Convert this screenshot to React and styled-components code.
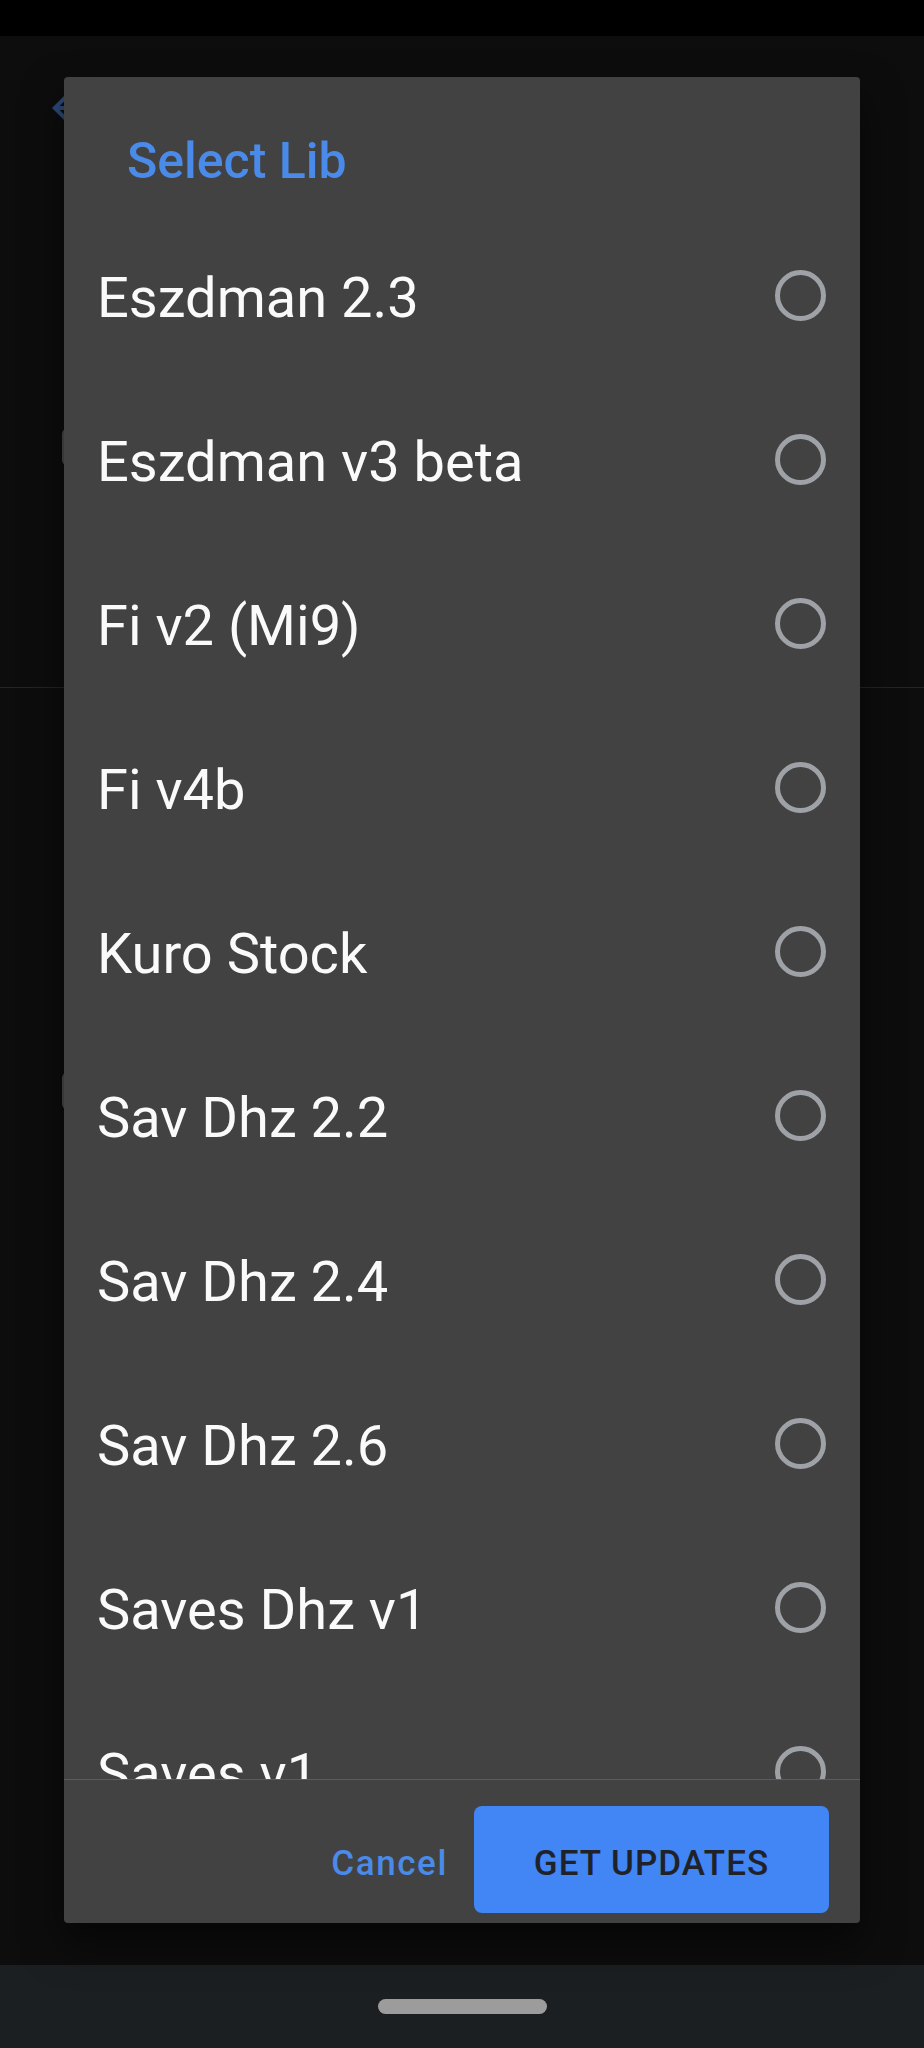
import React from 'react';
import styled, { createGlobalStyle } from 'styled-components';

const libs = [
  'Eszdman 2.3',
  'Eszdman v3 beta',
  'Fi v2 (Mi9)',
  'Fi v4b',
  'Kuro Stock',
  'Sav Dhz 2.2',
  'Sav Dhz 2.4',
  'Sav Dhz 2.6',
  'Saves Dhz v1',
  'Saves v1',
];

const GlobalStyle = createGlobalStyle`
  html, body {
    margin: 0;
    padding: 0;
    background: #0d0d0d;
  }
  * {
    box-sizing: border-box;
  }
`;

const Screen = styled.div`
  width: 924px;
  height: 2048px;
  display: flex;
  flex-direction: column;
  background: #0d0d0d;
  font-family: Roboto, 'Noto Sans', sans-serif;
  overflow: hidden;
`;

const StatusBar = styled.div`
  height: 36px;
  background: #000;
`;

const AppArea = styled.div`
  flex: 1;
  position: relative;
  display: flex;
  flex-direction: column;
`;

const TopSection = styled.div`
  height: 652px;
  padding-top: 48px;
  border-bottom: 1px solid #242424;
  display: flex;
  flex-direction: column;
`;

const BottomSection = styled.div`
  flex: 1;
  display: flex;
  flex-direction: column;
`;

const BackButton = styled.div`
  margin-left: 44px;
  width: 48px;
  height: 48px;
  color: #2b4a7a;
`;

const FieldBox = styled.div`
  margin-left: 62px;
  margin-top: ${(p) => p.$top}px;
  width: 780px;
  height: 38px;
  border: 2px solid #4c4c4c;
  border-radius: 6px;
`;

const NavBar = styled.div`
  height: 83px;
  background: #1c1f21;
  display: flex;
  justify-content: center;
  padding-top: 34px;
`;

const HomePill = styled.div`
  width: 169px;
  height: 15px;
  border-radius: 8px;
  background: #9c9c9c;
`;

const Dialog = styled.div`
  position: absolute;
  top: 41px;
  left: 64px;
  width: 796px;
  height: 1846px;
  background: #424242;
  border-radius: 4px;
  box-shadow: 0 20px 40px rgba(0, 0, 0, 0.55);
  display: flex;
  flex-direction: column;
`;

const Title = styled.h2`
  margin: 0;
  padding: 54px 0 22px 63px;
  font-size: 50px;
  line-height: 60px;
  font-weight: 500;
  color: #4a8ae8;
`;

const List = styled.div`
  flex: 1;
  overflow: hidden;
`;

const Row = styled.div`
  height: 164px;
  display: flex;
  align-items: center;
  justify-content: space-between;
  padding: 0 34px 0 33px;
`;

const Label = styled.span`
  font-size: 56px;
  line-height: 66px;
  padding-top: 5px;
  color: #fafafa;
`;

const Radio = styled.span`
  width: 51px;
  height: 51px;
  border-radius: 50%;
  border: 5px solid #9ea2a6;
`;

const Footer = styled.div`
  border-top: 1px solid #5c5c5c;
  display: flex;
  justify-content: flex-end;
  align-items: center;
  gap: 26px;
  padding: 26px 31px 10px;
`;

const TextButton = styled.button`
  background: none;
  border: none;
  padding: 8px 0 0;
  font-family: inherit;
  font-size: 35px;
  font-weight: 500;
  letter-spacing: 1.6px;
  color: #4a8ae8;
`;

const FilledButton = styled.button`
  width: 355px;
  height: 107px;
  padding: 8px 0 0;
  border: none;
  border-radius: 8px;
  background: #4285f4;
  font-family: inherit;
  font-size: 35px;
  font-weight: 500;
  letter-spacing: 1px;
  color: #1f2329;
`;

function BackArrow() {
  return (
    <svg viewBox="0 0 24 24" width="48" height="48" fill="currentColor">
      <path d="M20 11H7.83l5.59-5.59L12 4l-8 8 8 8 1.41-1.41L7.83 13H20v-2z" />
    </svg>
  );
}

export default function App() {
  return (
    <>
      <GlobalStyle />
      <Screen>
        <StatusBar />
        <AppArea>
          <TopSection>
            <BackButton>
              <BackArrow />
            </BackButton>
            <FieldBox $top={296} />
          </TopSection>
          <BottomSection>
            <FieldBox $top={384} />
          </BottomSection>

          <Dialog>
            <Title>Select Lib</Title>
            <List>
              {libs.map((name) => (
                <Row key={name}>
                  <Label>{name}</Label>
                  <Radio />
                </Row>
              ))}
            </List>
            <Footer>
              <TextButton>Cancel</TextButton>
              <FilledButton>GET UPDATES</FilledButton>
            </Footer>
          </Dialog>
        </AppArea>
        <NavBar>
          <HomePill />
        </NavBar>
      </Screen>
    </>
  );
}
